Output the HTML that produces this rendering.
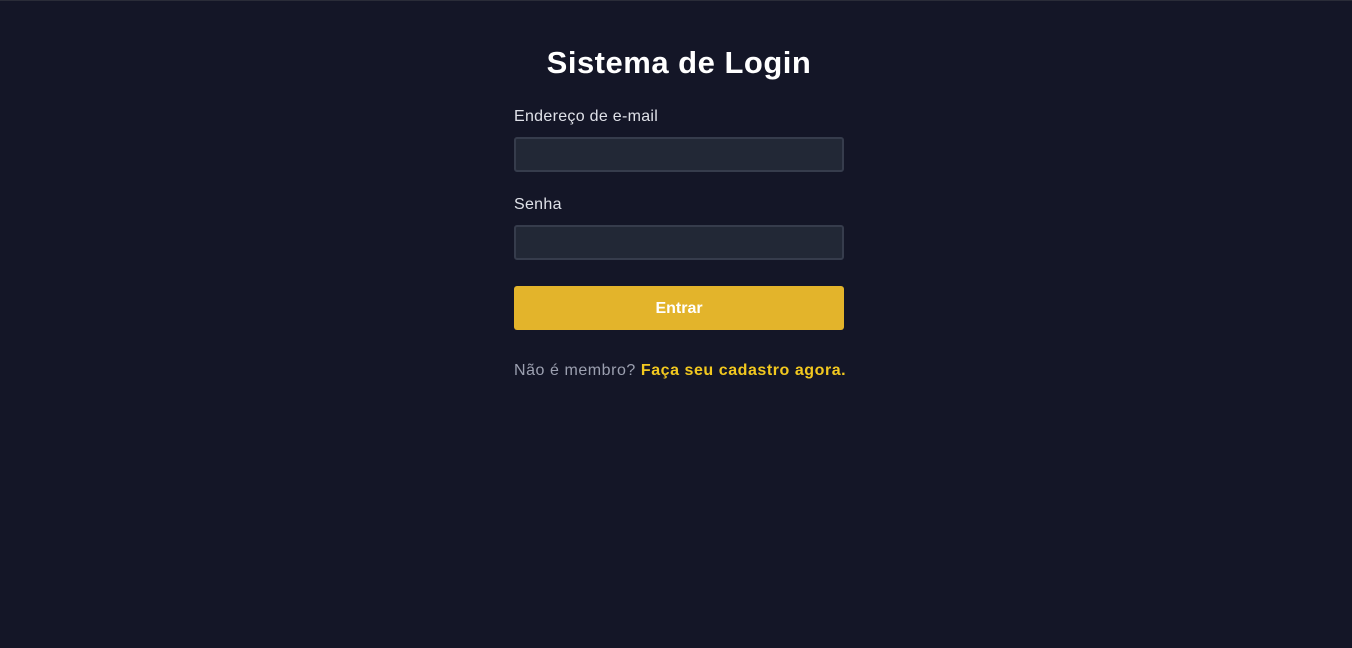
<!DOCTYPE html>
<html><head><meta charset="utf-8"><style>
html,body{margin:0;padding:0;width:1352px;height:648px;background:#141627;font-family:"Liberation Sans",sans-serif;overflow:hidden}
body{border-top:1px solid #2a2c38;box-sizing:border-box}
.wrap{position:absolute;left:514px;top:0;width:330px}
h1{position:absolute;left:-20px;width:370px;top:43px;margin:0;text-align:center;color:#fff;font-size:31px;font-weight:bold;line-height:40px;letter-spacing:0.5px}
label{position:absolute;left:0;color:#dfe1e8;font-size:16px;line-height:20px;letter-spacing:0.3px}
.inp{position:absolute;left:0;width:330px;height:35px;box-sizing:border-box;background:#222836;border:2px solid #363c4c;border-radius:3px}
.btn{position:absolute;left:0;top:286px;width:330px;height:44px;background:#e3b42b;border-radius:3px;color:#fff;font-weight:bold;font-size:16px;text-align:center;line-height:46px}
.foot{position:absolute;left:0;top:361px;font-size:16px;line-height:20px;color:#9ca0b0;white-space:nowrap;letter-spacing:0.55px}
.foot b{color:#f2c81f}
</style></head><body>
<div class="wrap">
<h1>Sistema de Login</h1>
<label style="top:107px">Endereço de e-mail</label>
<div class="inp" style="top:137px"></div>
<label style="top:195px">Senha</label>
<div class="inp" style="top:225px"></div>
<div class="btn">Entrar</div>
<div class="foot">Não é membro? <b>Faça seu cadastro agora.</b></div>
</div>
</body></html>
